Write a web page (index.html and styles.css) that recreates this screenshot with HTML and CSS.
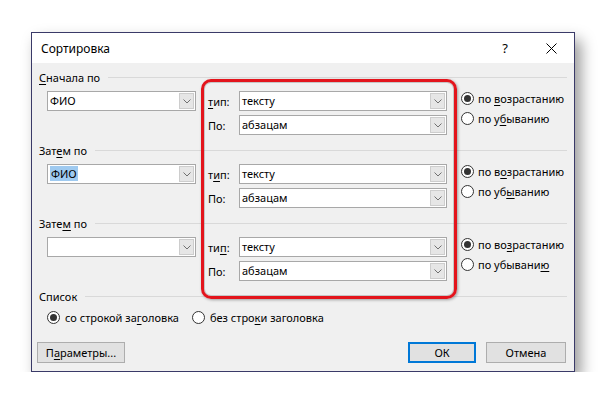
FILE: index.html
```html
<!DOCTYPE html>
<html lang="ru">
<head>
<meta charset="utf-8">
<title>Сортировка</title>
<link rel="stylesheet" href="styles.css">
</head>
<body>
<div class="stage">
  <div class="dialog">
    <div class="titlebar">
      <span class="title">Сортировка</span>
      <span class="tb-btn tb-help">?</span>
      <span class="tb-btn tb-close"><svg width="11" height="11" viewBox="0 0 11 11"><path d="M0.5 0.5 L10.5 10.5 M10.5 0.5 L0.5 10.5" stroke="#000" stroke-width="1" fill="none"/></svg></span>
    </div>
    <div class="body">
      <section class="sort">
        <div class="group-head"><span><u>С</u>начала по</span><i class="rule"></i></div>
        <div class="sort-row">
          <div class="combo combo-field"><span class="val">ФИО</span><span class="drop"><svg width="8" height="5" viewBox="0 0 8 5"><path d="M0.5 0.5 L4 4 L7.5 0.5" stroke="#707070" fill="none"/></svg></span></div>
          <div class="params">
            <div class="param"><span class="plabel"><u>т</u>ип:</span><div class="combo combo-type"><span class="val">тексту</span><span class="drop"><svg width="8" height="5" viewBox="0 0 8 5"><path d="M0.5 0.5 L4 4 L7.5 0.5" stroke="#707070" fill="none"/></svg></span></div></div>
            <div class="param"><span class="plabel">По:</span><div class="combo combo-type"><span class="val">абзацам</span><span class="drop"><svg width="8" height="5" viewBox="0 0 8 5"><path d="M0.5 0.5 L4 4 L7.5 0.5" stroke="#707070" fill="none"/></svg></span></div></div>
          </div>
          <div class="order">
            <div class="radio"><span class="dot on"></span><span>по <u>в</u>озрастанию</span></div>
            <div class="radio"><span class="dot"></span><span>по у<u>б</u>ыванию</span></div>
          </div>
        </div>
      </section>
      <section class="sort">
        <div class="group-head"><span>Зат<u>е</u>м по</span><i class="rule"></i></div>
        <div class="sort-row">
          <div class="combo combo-field"><span class="val"><span class="sel">ФИО</span></span><span class="drop"><svg width="8" height="5" viewBox="0 0 8 5"><path d="M0.5 0.5 L4 4 L7.5 0.5" stroke="#707070" fill="none"/></svg></span></div>
          <div class="params">
            <div class="param"><span class="plabel">т<u>и</u>п:</span><div class="combo combo-type"><span class="val">тексту</span><span class="drop"><svg width="8" height="5" viewBox="0 0 8 5"><path d="M0.5 0.5 L4 4 L7.5 0.5" stroke="#707070" fill="none"/></svg></span></div></div>
            <div class="param"><span class="plabel">По:</span><div class="combo combo-type"><span class="val">абзацам</span><span class="drop"><svg width="8" height="5" viewBox="0 0 8 5"><path d="M0.5 0.5 L4 4 L7.5 0.5" stroke="#707070" fill="none"/></svg></span></div></div>
          </div>
          <div class="order">
            <div class="radio"><span class="dot on"></span><span>по в<u>о</u>зрастанию</span></div>
            <div class="radio"><span class="dot"></span><span>по уб<u>ы</u>ванию</span></div>
          </div>
        </div>
      </section>
      <section class="sort">
        <div class="group-head"><span>Зате<u>м</u> по</span><i class="rule"></i></div>
        <div class="sort-row">
          <div class="combo combo-field"><span class="val"></span><span class="drop"><svg width="8" height="5" viewBox="0 0 8 5"><path d="M0.5 0.5 L4 4 L7.5 0.5" stroke="#707070" fill="none"/></svg></span></div>
          <div class="params">
            <div class="param"><span class="plabel">ти<u>п</u>:</span><div class="combo combo-type"><span class="val">тексту</span><span class="drop"><svg width="8" height="5" viewBox="0 0 8 5"><path d="M0.5 0.5 L4 4 L7.5 0.5" stroke="#707070" fill="none"/></svg></span></div></div>
            <div class="param"><span class="plabel">По:</span><div class="combo combo-type"><span class="val">абзацам</span><span class="drop"><svg width="8" height="5" viewBox="0 0 8 5"><path d="M0.5 0.5 L4 4 L7.5 0.5" stroke="#707070" fill="none"/></svg></span></div></div>
          </div>
          <div class="order">
            <div class="radio"><span class="dot on"></span><span>по во<u>з</u>растанию</span></div>
            <div class="radio"><span class="dot"></span><span>по убывани<u>ю</u></span></div>
          </div>
        </div>
      </section>
      <section class="list">
        <div class="group-head"><span>Список</span><i class="rule"></i></div>
        <div class="list-opts">
          <div class="radio"><span class="dot on"></span><span>со строкой за<u>г</u>оловка</span></div>
          <div class="radio"><span class="dot"></span><span>без стро<u>к</u>и заголовка</span></div>
        </div>
      </section>
      <div class="buttons">
        <button class="btn btn-params">П<u>а</u>раметры...</button>
        <button class="btn btn-ok">ОК</button>
        <button class="btn btn-cancel">Отмена</button>
      </div>
    </div>
    <div class="highlight"></div>
  </div>
</div>
</body>
</html>
```

FILE: styles.css
```css
* { box-sizing: border-box; margin: 0; padding: 0; }
html, body { background: #fff; }
body {
  font-family: "Noto Sans", "Open Sans", sans-serif;
  font-size: 11px;
  color: #000;
}
u { text-decoration: underline; text-underline-offset: 2px; }

.stage { padding: 32px 0 0 31px; }

.dialog {
  position: relative;
  width: 544px;
  height: 340px;
  border: 1px solid #3a3a68;
  background: #f0f0f0;
  box-shadow: 6px 8px 14px rgba(0, 0, 0, 0.4);
}

.titlebar {
  height: 30px;
  background: #fff;
  display: flex;
  align-items: center;
  padding-left: 9px;
}
.title { flex: 1; font-size: 12px; }
.tb-btn {
  width: 46px;
  height: 30px;
  display: flex;
  align-items: center;
  justify-content: center;
  flex: none;
}
.tb-help { font-size: 13px; }

.body { padding: 6px 7px 0 7px; }

.group-head {
  display: flex;
  align-items: center;
  height: 16px;
  gap: 8px;
  white-space: nowrap;
}
.rule { flex: 1; height: 1px; background: #d9d9d9; }

.sort-row {
  display: flex;
  height: 44px;
  margin: 6px 0 7px;
  padding-left: 8px;
}
.sort-row > * { flex: none; }

.combo {
  display: flex;
  height: 20px;
  border: 1px solid #a8a8a8;
  background: #fff;
}
.val {
  flex: 1;
  line-height: 18px;
  padding-left: 2px;
  white-space: nowrap;
  overflow: hidden;
}
.sel { background: #9fcaf0; padding: 0 1px; }
.drop {
  width: 15px;
  margin: 1px;
  margin-left: 0;
  background: #e6e6e6;
  border: 1px solid #cdcdcd;
  display: flex;
  align-items: center;
  justify-content: center;
  flex: none;
}
.combo-field { width: 149px; }
.combo-type { width: 208px; flex: none; }

.params {
  margin-left: 12px;
  display: flex;
  flex-direction: column;
  gap: 4px;
}
.param { display: flex; height: 20px; align-items: center; }
.plabel { width: 31px; flex: none; }

.order {
  margin-left: 14px;
  margin-top: -3px;
  display: flex;
  flex-direction: column;
}
.order .radio { height: 20px; }

.radio {
  display: flex;
  align-items: center;
  gap: 4px;
  white-space: nowrap;
}
.dot {
  width: 13px;
  height: 13px;
  border-radius: 50%;
  border: 1px solid #333;
  background: #fff;
  display: flex;
  align-items: center;
  justify-content: center;
  flex: none;
}
.dot.on::after {
  content: "";
  width: 7px;
  height: 7px;
  border-radius: 50%;
  background: #333;
}

.list-opts {
  display: flex;
  height: 16px;
  margin-top: 5px;
  padding-left: 8px;
  gap: 13px;
}
.list-opts .radio { gap: 5px; }

.buttons {
  display: flex;
  margin-top: 17px;
  height: 21px;
}
.btn {
  font: inherit;
  color: #000;
  height: 21px;
  background: #e1e1e1;
  border: 1px solid #adadad;
  flex: none;
}
.btn-params { width: 88px; margin-left: -2px; }
.btn-ok { width: 68px; margin-left: auto; border: 2px solid #0078d7; }
.btn-cancel { width: 80px; margin-left: 10px; margin-right: 1px; }

.highlight {
  position: absolute;
  left: 169px;
  top: 46px;
  width: 256px;
  height: 220px;
  border: 3px solid #e3141c;
  border-radius: 10px;
  box-shadow: inset 0 0 0 1px rgba(120, 120, 120, 0.35), 1px 1px 3px rgba(0, 0, 0, 0.35);
  pointer-events: none;
}
```
